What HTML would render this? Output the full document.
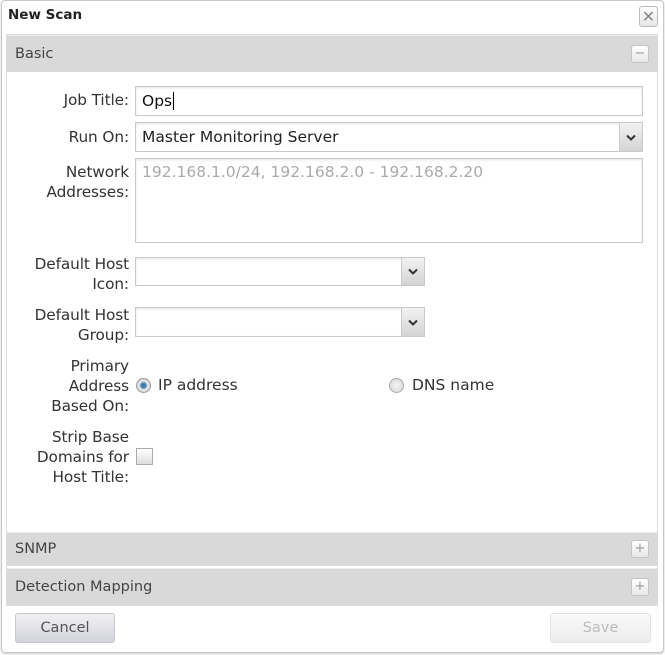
<!DOCTYPE html>
<html><head><style>
*{margin:0;padding:0;box-sizing:border-box}
body{width:665px;height:655px;background:#fff;font-family:"DejaVu Sans","Liberation Sans",sans-serif;color:#333;position:relative;overflow:hidden}
.a{position:absolute}
.dlg{left:1px;top:0;width:663px;height:653px;border:1px solid #c8c8c8;border-radius:4px;box-shadow:0 1px 2px #ccc}
.title{left:8px;top:7px;font-size:13.5px;font-weight:bold;color:#222}
.close{left:639px;top:6px;width:19px;height:21px;border:1px solid #bbb;border-radius:3px;background:linear-gradient(#fff,#e6e6e6);font-size:16px;color:#888;text-align:center;line-height:19px}
.panel{left:6px;top:34px;width:652px;height:572px;border:1px solid #ddd;background:#fff}
.hdr{left:7px;width:650px;background:#d9d9d9;font-size:14.5px;color:#444;padding-left:8px;border-top:1px solid #eee}
.tg{width:18px;height:18px;border:1px solid #c4c4c4;border-radius:3px;background:linear-gradient(#fff,#e8e8e8);font-size:13px;line-height:16px;text-align:center;color:#999}
.lbl{width:122px;left:7px;text-align:right;font-size:15.3px;line-height:20px;color:#333;letter-spacing:-0.1px}
.in{border:1px solid #c9c9c9;background:#fff;box-shadow:inset 0 1px 2px #e4e4e4;font-size:15.5px;padding-left:6px}
.arr{position:absolute;right:0;top:0;bottom:0;width:23px;background:linear-gradient(#f2f2f2,#d4d4d4);border-left:1px solid #ccc;display:flex;align-items:center;justify-content:center}
.btn{height:30px;border:1px solid #c8c8cc;border-radius:3px;font-size:14.5px;text-align:center;line-height:28px}
</style></head><body>
<div class="a dlg"></div>
<div class="a title">New Scan</div>
<div class="a close">✕</div>
<div class="a panel"></div>
<div class="a hdr" style="top:35px;height:37px;line-height:36px">Basic</div>
<div class="a tg" style="left:631px;top:45px">−</div>

<div class="a lbl" style="top:90px">Job Title:</div>
<div class="a in" style="left:135px;top:86px;width:508px;height:30px;line-height:28px;color:#111">Ops<span style="border-left:1px solid #000;margin-left:1px"></span></div>

<div class="a lbl" style="top:127px">Run On:</div>
<div class="a in" style="left:135px;top:122px;width:508px;height:30px;line-height:28px;color:#222">Master Monitoring Server<div class="arr"><svg width="10" height="7" viewBox="0 0 10 7"><path d="M1 1.5L5 5.5L9 1.5" stroke="#333" stroke-width="2" fill="none"/></svg></div></div>

<div class="a lbl" style="top:162px">Network<br>Addresses:</div>
<div class="a in" style="left:135px;top:158px;width:508px;height:85px;line-height:26px;color:#aaa">192.168.1.0/24, 192.168.2.0 - 192.168.2.20</div>

<div class="a lbl" style="top:254px">Default Host<br>Icon:</div>
<div class="a in" style="left:135px;top:257px;width:290px;height:29px"><div class="arr"><svg width="10" height="7" viewBox="0 0 10 7"><path d="M1 1.5L5 5.5L9 1.5" stroke="#333" stroke-width="2" fill="none"/></svg></div></div>

<div class="a lbl" style="top:305px">Default Host<br>Group:</div>
<div class="a in" style="left:135px;top:307px;width:290px;height:30px"><div class="arr"><svg width="10" height="7" viewBox="0 0 10 7"><path d="M1 1.5L5 5.5L9 1.5" stroke="#333" stroke-width="2" fill="none"/></svg></div></div>

<div class="a lbl" style="top:356px">Primary<br>Address<br>Based On:</div>
<div class="a" style="left:136px;top:378px;width:15px;height:15px;border-radius:50%;border:1px solid #999;background:radial-gradient(#2d6d99 0,#5b97c0 3px,#e8e8e8 4px,#d4d4d4 7px)"></div>
<div class="a" style="left:158px;top:376px;font-size:15.5px;color:#333">IP address</div>
<div class="a" style="left:389px;top:378px;width:15px;height:15px;border-radius:50%;border:1px solid #aaa;background:radial-gradient(#f4f4f4,#d4d4d4)"></div>
<div class="a" style="left:412px;top:376px;font-size:15.5px;color:#333">DNS name</div>

<div class="a lbl" style="top:427px">Strip Base<br>Domains for<br>Host Title:</div>
<div class="a" style="left:136px;top:448px;width:17px;height:17px;border:1px solid #aaa;background:linear-gradient(#fff,#ddd)"></div>

<div class="a hdr" style="top:532px;height:34px;line-height:33px">SNMP</div>
<div class="a tg" style="left:631px;top:540px">+</div>
<div class="a hdr" style="top:568px;height:37px;line-height:36px">Detection Mapping</div>
<div class="a tg" style="left:631px;top:578px">+</div>

<div class="a btn" style="left:15px;top:613px;width:100px;background:linear-gradient(#f1f1f4,#d3d3dc);color:#555">Cancel</div>
<div class="a btn" style="left:550px;top:613px;width:101px;background:linear-gradient(#fafafa,#ececec);color:#bbb;border-color:#e4e4e4">Save</div>
</body></html>
